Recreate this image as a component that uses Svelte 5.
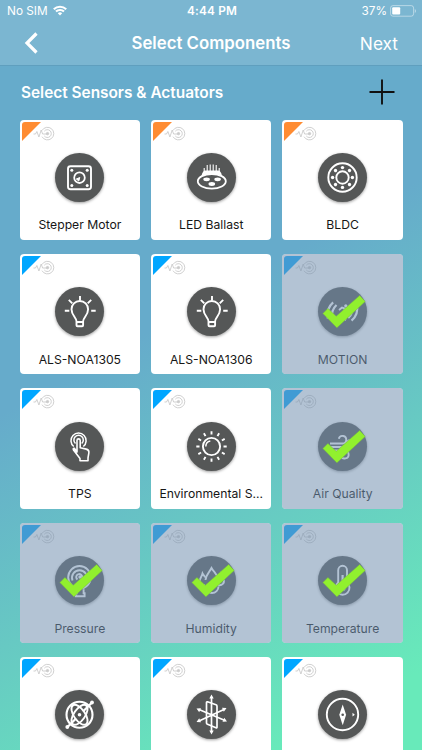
<script>
  const components = [
    { name: "Stepper Motor", icon: "stepper", kind: "actuator" },
    { name: "LED Ballast", icon: "led", kind: "actuator" },
    { name: "BLDC", icon: "bldc", kind: "actuator" },
    { name: "ALS-NOA1305", icon: "bulb", kind: "sensor" },
    { name: "ALS-NOA1306", icon: "bulb", kind: "sensor" },
    { name: "MOTION", icon: "motion", kind: "sensor", selected: true },
    { name: "TPS", icon: "touch", kind: "sensor" },
    { name: "Environmental S...", icon: "sun", kind: "sensor" },
    { name: "Air Quality", icon: "wind", kind: "sensor", selected: true },
    { name: "Pressure", icon: "pressure", kind: "sensor", selected: true },
    { name: "Humidity", icon: "humidity", kind: "sensor", selected: true },
    { name: "Temperature", icon: "temperature", kind: "sensor", selected: true },
    { icon: "gyro", kind: "sensor" },
    { icon: "axes", kind: "sensor" },
    { icon: "compass", kind: "sensor" },
  ];

  let items = $state(components);

  const eighths = [0, 45, 90, 135, 180, 225, 270, 315];
  const twelfths = [0, 30, 60, 90, 120, 150, 180, 210, 240, 270, 300, 330];

  function toggle(item) {
    item.selected = !item.selected;
  }
</script>

<div class="screen">
  <header>
    <div class="status">
      <div class="carrier">
        <span>No SIM</span>
        <svg width="14" height="11" viewBox="0 0 14 11">
          <path d="M.8 4.3a8.8 8.8 0 0 1 12.4 0M3 6.6a5.7 5.7 0 0 1 8 0" fill="none" stroke="#fff" stroke-width="2.1" />
          <path d="M4.8 8.3a3.1 3.1 0 0 1 4.4 0L7 10.6z" fill="#fff" />
        </svg>
      </div>
      <span class="time">4:44 PM</span>
      <div class="battery">
        <span>37%</span>
        <svg width="27" height="12" viewBox="0 0 27 12">
          <rect x="0.6" y="0.6" width="23" height="10.6" rx="2.4" fill="none" stroke="#fff" stroke-opacity="0.45" />
          <rect x="2.2" y="2.2" width="8" height="7.4" rx="1" fill="#fff" />
          <path d="M24.8 4v4c1.5-.5 1.5-3.5 0-4z" fill="#fff" fill-opacity="0.5" />
        </svg>
      </div>
    </div>
    <nav>
      <button class="back" aria-label="Back">
        <svg width="14" height="22" viewBox="0 0 14 22">
          <path d="M12.5 1.5 3 11l9.5 9.5" fill="none" stroke="#fff" stroke-width="3.2" />
        </svg>
      </button>
      <h1>Select Components</h1>
      <button class="next">Next</button>
    </nav>
  </header>

  <div class="section">
    <h2>Select Sensors &amp; Actuators</h2>
    <button class="add" aria-label="Add">
      <svg width="26" height="26" viewBox="0 0 26 26">
        <path d="M13 .5v25M.5 13h25" stroke="#111" stroke-width="1.9" />
      </svg>
    </button>
  </div>

  <div class="grid">
    {#each items as item}
      <button class="card" onclick={() => toggle(item)}>
        <svg class="tag" width="44" height="24" viewBox="0 0 44 24">
          <path class={item.kind} d="M2 21V5q0-3 3-3h16z" />
          <g fill="none" stroke="#cbcbcb" stroke-width="0.9">
            <path d="M13.5 14h2l1.4-2.5 2 5.5 2.3-7 1.4 4h5" />
            <path d="M22 10.5a6.3 6.3 0 1 1 0 6.2M24.3 11.2a3.9 3.9 0 1 1 0 4.8" />
            <circle cx="27.5" cy="13.6" r="1.2" fill="#cbcbcb" />
          </g>
        </svg>

        <div class="disc">
          <svg width="49" height="49" viewBox="0 0 49 49" fill="none" stroke="#fff" stroke-width="1.9">
            {#if item.icon === "stepper"}
              <rect x="13" y="13.2" width="23" height="23" rx="2.5" />
              <circle cx="24.5" cy="24.7" r="5.3" stroke-width="1.8" />
              <path d="m24.8 24.5-1 3.5-2.5-2z" fill="#fff" stroke-width="1" />
              <g fill="#fff" stroke="none">
                <circle cx="16.8" cy="17.2" r="1.5" />
                <circle cx="32.2" cy="17.2" r="1.5" />
                <circle cx="16.8" cy="32.4" r="1.5" />
                <circle cx="32.2" cy="32.4" r="1.5" />
              </g>
            {:else if item.icon === "led"}
              <path d="M17.2 19v-4M20.2 18v-6M23.2 18v-6.5M26.2 18v-6.5M29.2 18v-6M32.2 19v-4" stroke-width="1.1" />
              <path d="M14.5 23q1-5.5 4-5.5h12.500q3 0 4 5.500z" fill="#fff" stroke="none" />
              <ellipse cx="24.8" cy="28.3" rx="14" ry="7.3" fill="#555757" stroke-width="1.8" />
              <g fill="#fff" stroke="none">
                <ellipse cx="19.6" cy="26.3" rx="3.3" ry="1.9" />
                <ellipse cx="30.6" cy="26.3" rx="3.3" ry="1.9" />
                <ellipse cx="24.8" cy="31" rx="3.3" ry="1.9" />
              </g>
            {:else if item.icon === "bldc"}
              <circle cx="24.5" cy="24.5" r="14.2" />
              <circle cx="24.5" cy="24.5" r="6.2" />
              {#each eighths as angle}
                <circle cx="24.5" cy="14.6" r="1.7" fill="#fff" stroke="none" transform="rotate({angle} 24.5 24.5)" />
              {/each}
            {:else if item.icon === "bulb"}
              <path d="M21.5 34.5c0-4-5-6-5-12.2a8.3 8.3 0 0 1 16.6 0c0 6.2-5 8.2-5 12.2v3.7q0 1-1 1h-4.6q-1 0-1-1zM21.5 35h6.6" />
              <path d="M25 9v4.5M9.8 23.8h4.5M36.2 23.8h4.5M13.8 12.8l3.5 3.5M36.2 12.8l-3.5 3.5" />
            {:else if item.icon === "motion"}
              <path d="M12.5 16q-5 8.5 0 17M16.5 17.5q-3.8 7 0 14" stroke-width="2.2" transform="rotate(18 16 24)" />
              <path d="M36.5 16q5 8.5 0 17M32.5 17.5q3.8 7 0 14" stroke-width="2.2" transform="rotate(18 33 24)" />
              <circle cx="27.8" cy="18.8" r="1.6" fill="#fff" stroke="none" />
              <path d="m21 23 3-2.5 3 1-2 5 3 3-1 4M24.5 27l-4 3.5M27 22l3 2" />
            {:else if item.icon === "touch"}
              <path d="M18.8 24.5a7.6 7.6 0 1 1 9.5 0" stroke-width="1.5" />
              <path d="M20.5 21.5a4.7 4.7 0 1 1 6.2 0" stroke-width="1.5" />
              <path d="M22 30V18.5q0-1.6 1.6-1.6t1.6 1.6v7.3l6 1.3q3 .7 2.7 3.5l-.9 5.4v2.8h-8v-2.3l-6.5-8.5q-.8-1.9.8-1.7z" stroke-width="1.6" stroke-linejoin="round" />
            {:else if item.icon === "sun"}
              <circle cx="24.5" cy="24.5" r="8.6" />
              <path d="M18.8 24.5a5.7 5.7 0 0 1 4.5-5.5" stroke-width="1.5" />
              {#each twelfths as angle}
                <path d="M24.5 9.3v3.2" transform="rotate({angle} 24.5 24.5)" />
              {/each}
            {:else if item.icon === "wind"}
              <path d="M12 21.5h12.5a3.8 3.8 0 1 0-3.7-4.8M12 25h20.5a3.5 3.5 0 1 0-3.3-4.8M15 28.5h11.5a4 4 0 1 1-3.7 5.2" />
            {:else if item.icon === "pressure"}
              <circle cx="24.5" cy="21.3" r="11.3" />
              <path d="M17.5 24.5a7.5 7.5 0 1 1 14 0M22.5 23.5a3 3 0 1 1 4-.5" />
              <circle cx="25" cy="21" r="1.7" fill="#fff" stroke="none" />
              <path d="M21.8 33.5v3.8h-1v3h8.8v-3h-1v-4" />
            {:else if item.icon === "humidity"}
              <path d="M18.5 24c.5-5 4-8 6-12 2 4 6 6 6.5 11" />
              <path d="M18 29c-4 1-6.5-2-5-5.5 1-2.5 2-4 2.5-6 1 2 3 3.5 4 5M31 29c4 1 7-2 5.5-5.5-1-2.5-2.5-3.5-3-5.5-1 2-2 3-3 4.5" />
              <path d="M18.5 30.5a6.5 6.5 0 0 0 13 0" />
            {:else if item.icon === "temperature"}
              <path d="M20.2 26.5V14.2a4.4 4.4 0 0 1 8.8 0v12.3a6.9 6.9 0 1 1-8.8 0z" />
              <path d="M24.6 19v11" stroke-width="2.2" />
              <circle cx="24.6" cy="32" r="3" fill="#fff" stroke="none" />
            {:else if item.icon === "gyro"}
              <circle cx="24.5" cy="24.8" r="13" stroke-width="2.1" />
              <ellipse cx="24.5" cy="24.8" rx="11.5" ry="5.6" transform="rotate(55 24.5 24.8)" />
              <ellipse cx="24.5" cy="24.8" rx="11.5" ry="5.6" transform="rotate(-55 24.5 24.8)" />
              <path d="M12.5 37 21 28.5M28 21.5l8.5-8.5" stroke-width="2.2" />
              <circle cx="24.5" cy="24.8" r="1.8" fill="#fff" stroke="none" />
              <circle cx="12.3" cy="37" r="1.9" fill="#fff" stroke="none" />
              <circle cx="37" cy="12.5" r="1.9" fill="#fff" stroke="none" />
            {:else if item.icon === "axes"}
              <path d="M24.5 7v35M12 19.5l26 11M12 31l26-12" stroke-width="1.7" />
              <path d="M19.5 12.5q0-1 1-.7l8.5 3q1 .4 1 1.4v21q0 1-1 .6l-8.5-3.5q-1-.4-1-1.4z" stroke-width="1.7" />
              <path d="m24.5 4.5 2.2 4h-4.4zM24.5 44.5l2.2-4h-4.4zM9.5 18.5l4.5-.3-1.8 4zM40 31.5l-4.5.3 1.8-4zM9.5 32l4.5.3-1.8-4zM39.5 18l-4.5-.3 1.8 4z" fill="#fff" stroke="none" />
            {:else if item.icon === "compass"}
              <circle cx="24.5" cy="24.5" r="15.7" />
              <path d="m24.7 14.5 3.4 10.3-3.4 10.4-3.4-10.4z" fill="#fff" stroke="none" />
              <circle cx="24.7" cy="24.8" r="1.3" fill="#555757" stroke="none" />
              <path d="m34.5 22.8 2.3 1.9-2.3 1.9z" fill="#fff" stroke="none" />
            {/if}
          </svg>
        </div>

        {#if item.name}
          <span class="label">{item.name}</span>
        {/if}

        {#if item.selected}
          <div class="overlay">
            <svg width="49" height="49" viewBox="0 0 49 49">
              <path d="m4.9 26.5 5-5 8.3 7.8L41.7 8.5l5.5 6-28.3 26.3z" fill="#91f02e" stroke="#76b944" stroke-width="0.5" />
            </svg>
          </div>
        {/if}
      </button>
    {/each}
  </div>
</div>

<style>
  :global(body) {
    margin: 0;
  }

  .screen {
    height: 750px;
    overflow: hidden;
    display: flex;
    flex-direction: column;
    font-family: Inter, "Liberation Sans", sans-serif;
    color: #fff;
    background: linear-gradient(150.6deg, #66abcb 0%, #66abcb 42%, #68eaba 92%);
  }

  button {
    border: 0;
    padding: 0;
    background: none;
    font: inherit;
    color: inherit;
  }

  h1,
  h2 {
    margin: 0;
    font-weight: 600;
  }

  svg {
    display: block;
  }

  header {
    flex: none;
    height: 65px;
    background: #7bb6d1;
    border-bottom: 1px solid #5f9fbe;
  }

  .status {
    height: 21px;
    display: grid;
    grid-template-columns: 1fr auto 1fr;
    align-items: center;
    padding: 0 5px 0 7px;
    box-sizing: border-box;
    font-size: 11.8px;
  }

  .carrier,
  .battery {
    display: flex;
    align-items: center;
    gap: 5px;
  }

  .battery {
    justify-content: flex-end;
    gap: 3px;
  }

  .time {
    font-weight: 600;
    letter-spacing: 0.2px;
  }

  nav {
    height: 44px;
    display: grid;
    grid-template-columns: 1fr auto 1fr;
    align-items: center;
    padding: 0 24px;
  }

  h1 {
    font-size: 16.8px;
  }

  .next {
    justify-self: end;
    font-size: 17.3px;
  }

  .section {
    flex: none;
    height: 53.5px;
    display: flex;
    align-items: center;
    justify-content: space-between;
    padding: 0 27px 1px 21px;
    box-sizing: border-box;
  }

  h2 {
    font-size: 15.4px;
  }

  .grid {
    display: grid;
    grid-template-columns: repeat(3, 120.3px);
    grid-auto-rows: 120.3px;
    gap: 14.1px 11.1px;
    padding-left: 19.7px;
  }

  .card {
    position: relative;
    display: flex;
    flex-direction: column;
    align-items: center;
    justify-content: flex-start;
    background: #fff;
    border-radius: 4px;
    color: #161616;
    overflow: hidden;
  }

  .tag {
    align-self: flex-start;
  }

  .actuator {
    fill: #ff8c32;
  }

  .sensor {
    fill: #00a6ff;
  }

  .disc {
    width: 49px;
    height: 49px;
    margin-top: 9.4px;
    border-radius: 50%;
    background: #555757;
    box-shadow: 0 1px 3px rgba(0, 0, 0, 0.4);
  }

  .label {
    margin-top: 14.5px;
    font-size: 12.2px;
    line-height: 18px;
    white-space: nowrap;
  }

  .overlay {
    position: absolute;
    inset: 0;
    display: flex;
    justify-content: center;
    padding-top: 33.4px;
    background: rgba(117, 146, 176, 0.55);
  }
</style>
